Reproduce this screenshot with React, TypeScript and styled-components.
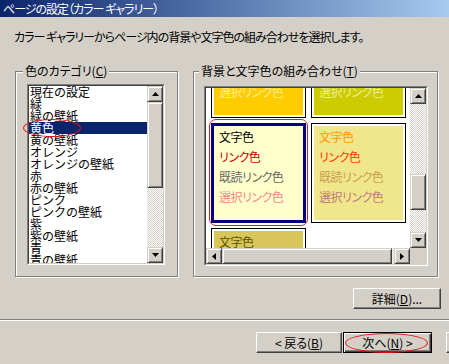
import React from "react";
import styled, { createGlobalStyle, css } from "styled-components";

const GlobalStyle = createGlobalStyle`
  html, body {
    margin: 0;
    padding: 0;
    background: #d4d0c8;
  }
  body {
    width: 449px;
    height: 364px;
    overflow: hidden;
  }
`;

const raised = css`
  background: #d4d0c8;
  border: 1px solid;
  border-color: #d4d0c8 #404040 #404040 #d4d0c8;
  box-shadow: inset 1px 1px 0 #fff, inset -1px -1px 0 #808080;
  box-sizing: border-box;
`;

const checker = css`
  background-color: #fff;
  background-image: conic-gradient(
    #d4d0c8 25%,
    transparent 0 50%,
    #d4d0c8 0 75%,
    transparent 0
  );
  background-size: 2px 2px;
`;

const Window = styled.div`
  width: 449px;
  height: 364px;
  overflow: hidden;
  background: #d4d0c8;
  font-family: "Noto Sans CJK JP", "Noto Sans", sans-serif;
  font-size: 12px;
  color: #000;
  display: flex;
  flex-direction: column;
`;

const TitleBar = styled.div`
  flex: none;
  height: 17px;
  padding-left: 3px;
  background: linear-gradient(to right, #0a246a, #a6caf0);
  color: #fff;
  line-height: 17px;
  white-space: nowrap;
  letter-spacing: -1px;
  font-feature-settings: "palt";
`;

const Intro = styled.p`
  margin: 13px 0 0 14px;
  line-height: 14px;
  white-space: nowrap;
  letter-spacing: -1px;
  font-feature-settings: "palt";
`;

const Groups = styled.div`
  display: flex;
  gap: 15px;
  margin: 20px 0 0 15px;
`;

const Group = styled.fieldset<{ $width: number; $padTop: number; $padLeft: number }>`
  flex: none;
  margin: 0;
  min-width: 0;
  width: ${(p) => p.$width}px;
  height: 213px;
  box-sizing: border-box;
  padding: ${(p) => p.$padTop}px 0 0 ${(p) => p.$padLeft}px;
  border: 1px solid #808080;
  box-shadow: 1px 1px 0 #fff, inset 1px 1px 0 #fff;
`;

const Legend = styled.legend<{ $shift: number }>`
  margin-left: ${(p) => p.$shift}px;
  padding: 0 2px;
  line-height: 14px;
  background: #d4d0c8;
  white-space: nowrap;
  font-feature-settings: "palt";
`;

const Sunken = styled.div<{ $w: number; $h: number }>`
  position: relative;
  width: ${(p) => p.$w}px;
  height: ${(p) => p.$h}px;
  box-sizing: border-box;
  border: 1px solid;
  border-color: #808080 #fff #fff #808080;
`;

const SunkenInner = styled.div`
  height: 100%;
  box-sizing: border-box;
  border: 1px solid;
  border-color: #404040 #d4d0c8 #d4d0c8 #404040;
  background: #fff;
  display: grid;
  grid-template-columns: 1fr 16px;
  grid-template-rows: 1fr;
  overflow: hidden;
`;

const PaneInner = styled(SunkenInner)`
  grid-template-rows: 1fr 16px;
`;

const Items = styled.div`
  overflow: hidden;
  min-width: 0;
`;

const Item = styled.div<{ $selected?: boolean }>`
  height: 12px;
  line-height: 12px;
  padding-left: 1px;
  white-space: nowrap;
  ${(p) =>
    p.$selected &&
    css`
      background: #0a246a;
      color: #fff;
    `}
`;

const Ring = styled.div<{ $top: number }>`
  position: absolute;
  left: -5px;
  top: ${(p) => p.$top}px;
  width: 58px;
  height: 18px;
  box-sizing: border-box;
  border: 1px solid #e41414;
  border-radius: 50%;
  pointer-events: none;
`;

const VScroll = styled.div`
  display: flex;
  flex-direction: column;
  width: 16px;
  min-height: 0;
`;

const HScroll = styled.div`
  display: flex;
  height: 16px;
`;

const ScrollButton = styled.div`
  ${raised};
  flex: none;
  width: 16px;
  height: 16px;
  display: flex;
  align-items: center;
  justify-content: center;
`;

const Thumb = styled.div<{ $size: number; $horizontal?: boolean }>`
  ${raised};
  flex: none;
  ${(p) => (p.$horizontal ? `width: ${p.$size}px;` : `height: ${p.$size}px;`)}
`;

const Track = styled.div<{ $size?: number }>`
  ${checker};
  ${(p) => (p.$size !== undefined ? `flex: none; flex-basis: ${p.$size}px;` : "flex: 1;")}
`;

const Corner = styled.div`
  background: #d4d0c8;
`;

const Viewport = styled.div`
  overflow: hidden;
  min-width: 0;
  min-height: 0;
`;

const CardGrid = styled.div`
  display: grid;
  grid-template-columns: 95px 95px;
  grid-auto-rows: 100px;
  column-gap: 5px;
  row-gap: 5px;
  margin-top: -70px;
  padding-left: 5px;
`;

const Card = styled.div<{ $selected?: boolean }>`
  position: relative;
  box-sizing: border-box;
  background: #fff;
  border: 1px solid #000;
  padding: 2px;
  ${(p) =>
    p.$selected &&
    css`
      border: 3px solid #000080;
      padding: 0;
      &::after {
        content: "";
        position: absolute;
        top: -7px;
        bottom: -6px;
        left: -5px;
        right: -5px;
        border: 1px solid #d81c1c;
        border-radius: 7px;
      }
    `}
`;

const Swatch = styled.div<{ $bg: string }>`
  height: 100%;
  box-sizing: border-box;
  padding: 1px 0 0 5px;
  background: ${(p) => p.$bg};
`;

const Sample = styled.div<{ $color: string }>`
  line-height: 20px;
  color: ${(p) => p.$color};
  white-space: nowrap;
  letter-spacing: -0.5px;
  font-feature-settings: "palt";
`;

const DetailRow = styled.div`
  display: flex;
  justify-content: flex-end;
  padding-right: 8px;
  margin-top: 11px;
`;

const Button = styled.button<{ $width: number; $default?: boolean }>`
  position: relative;
  flex: none;
  width: ${(p) => p.$width}px;
  height: 21px;
  padding: 0;
  box-sizing: border-box;
  font-family: inherit;
  font-size: 12px;
  line-height: 14px;
  color: #000;
  background: #d4d0c8;
  border: 1px solid;
  border-color: #fff #404040 #404040 #fff;
  box-shadow: inset -1px -1px 0 #808080;
  white-space: nowrap;
  font-feature-settings: "palt";
  ${(p) =>
    p.$default &&
    css`
      border: 1px solid #000;
      box-shadow: inset 1px 1px 0 #fff, inset -1px -1px 0 #404040,
        inset -2px -2px 0 #808080;
      &::after {
        content: "";
        position: absolute;
        left: 1px;
        top: 0px;
        width: 83px;
        height: 20px;
        box-sizing: border-box;
        border: 1px solid #e41414;
        border-radius: 50%;
      }
    `}
`;

const Separator = styled.div`
  margin-top: 10px;
  height: 1px;
  background: #808080;
  border-bottom: 1px solid #fff;
`;

const NavRow = styled.div`
  display: flex;
  gap: 1px;
  padding-left: 256px;
  margin-top: 11px;
`;

const Spacer = styled.div`
  flex: none;
  width: 12px;
`;

type Dir = "up" | "down" | "left" | "right";

const Arrow = ({ dir }: { dir: Dir }) => {
  const vertical = dir === "up" || dir === "down";
  const points = {
    up: "0,4 3.5,0 7,4",
    down: "0,0 7,0 3.5,4",
    left: "4,0 4,7 0,3.5",
    right: "0,0 0,7 4,3.5",
  }[dir];
  return (
    <svg
      width={vertical ? 7 : 4}
      height={vertical ? 4 : 7}
      viewBox={vertical ? "0 0 7 4" : "0 0 4 7"}
    >
      <polygon points={points} fill="#000" />
    </svg>
  );
};

const categories = [
  "現在の設定",
  "緑",
  "緑の壁紙",
  "黄色",
  "黄の壁紙",
  "オレンジ",
  "オレンジの壁紙",
  "赤",
  "赤の壁紙",
  "ピンク",
  "ピンクの壁紙",
  "紫",
  "紫の壁紙",
  "青",
  "青の壁紙",
];
const selectedCategory = 3;

type Scheme = {
  bg: string;
  text: string;
  link: string;
  visited: string;
  active: string;
  selected?: boolean;
};

const schemes: Scheme[] = [
  { bg: "#ffcc00", text: "#000000", link: "#cc3300", visited: "#996600", active: "#ffee99" },
  { bg: "#cccc00", text: "#333300", link: "#996600", visited: "#666600", active: "#eeee99" },
  { bg: "#ffffcc", text: "#000000", link: "#cc0000", visited: "#666666", active: "#f08a8a", selected: true },
  { bg: "#f0e68c", text: "#ff9900", link: "#ff3c00", visited: "#c8a050", active: "#c07a7a" },
  { bg: "#d9c65a", text: "#5c5400", link: "#993300", visited: "#7a6a30", active: "#fff0a0" },
];

const Underline = styled.span`
  text-decoration: underline;
`;

export default function App() {
  return (
    <Window>
      <GlobalStyle />
      <TitleBar>ページの設定（カラー ギャラリー）</TitleBar>
      <Intro>カラー ギャラリーからページ内の背景や文字色の組み合わせを選択します。</Intro>

      <Groups>
        <Group $width={163} $padTop={6} $padLeft={11}>
          <Legend $shift={-4}>
            色のカテゴリ(<Underline>C</Underline>)
          </Legend>
          <Sunken $w={138} $h={181}>
            <SunkenInner>
              <Items>
                {categories.map((c, i) => (
                  <Item key={c} $selected={i === selectedCategory}>
                    {c}
                  </Item>
                ))}
              </Items>
              <VScroll>
                <ScrollButton>
                  <Arrow dir="up" />
                </ScrollButton>
                <Thumb $size={86} />
                <Track />
                <ScrollButton>
                  <Arrow dir="down" />
                </ScrollButton>
              </VScroll>
            </SunkenInner>
            <Ring $top={2 + selectedCategory * 12 - 4} />
          </Sunken>
        </Group>

        <Group $width={245} $padTop={8} $padLeft={10}>
          <Legend $shift={-5}>
            背景と文字色の組み合わせ(<Underline>T</Underline>)
          </Legend>
          <Sunken $w={224} $h={180}>
            <PaneInner>
              <Viewport>
                <CardGrid>
                  {schemes.map((s, i) => (
                    <Card key={i} $selected={s.selected}>
                      <Swatch $bg={s.bg}>
                        <Sample $color={s.text}>文字色</Sample>
                        <Sample $color={s.link}>リンク色</Sample>
                        <Sample $color={s.visited}>既読リンク色</Sample>
                        <Sample $color={s.active}>選択リンク色</Sample>
                      </Swatch>
                    </Card>
                  ))}
                </CardGrid>
              </Viewport>
              <VScroll>
                <ScrollButton>
                  <Arrow dir="up" />
                </ScrollButton>
                <Track $size={70} />
                <Thumb $size={36} />
                <Track />
                <ScrollButton>
                  <Arrow dir="down" />
                </ScrollButton>
              </VScroll>
              <HScroll>
                <ScrollButton>
                  <Arrow dir="left" />
                </ScrollButton>
                <Thumb $size={170} $horizontal />
                <Track />
                <ScrollButton>
                  <Arrow dir="right" />
                </ScrollButton>
              </HScroll>
              <Corner />
            </PaneInner>
          </Sunken>
        </Group>
      </Groups>

      <DetailRow>
        <Button $width={88}>
          詳細(<Underline>D</Underline>)...
        </Button>
      </DetailRow>

      <Separator />

      <NavRow>
        <Button $width={86}>
          &lt; 戻る(<Underline>B</Underline>)
        </Button>
        <Button $width={89} $default>
          次へ(<Underline>N</Underline>) &gt;
        </Button>
        <Spacer />
        <Button $width={86}>キャンセル</Button>
      </NavRow>
    </Window>
  );
}
